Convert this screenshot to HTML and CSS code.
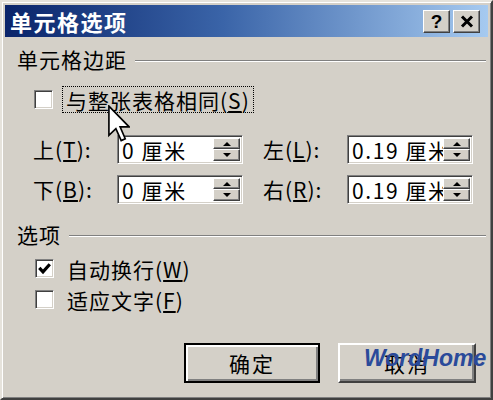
FILE: index.html
```html
<!DOCTYPE html>
<html lang="zh-CN">
<head>
    <meta charset="UTF-8">
    <meta name="viewport" content="width=device-width, initial-scale=1.0">
    <title>单元格选项</title>
    <link rel="stylesheet" href="styles.css">
</head>
<body>
    <div class="dialog">
        <div class="titlebar">
            <span class="title">单元格选项</span>
            <div class="caption-btns">
                <span class="cap-btn">?</span>
                <span class="cap-btn">
                    <svg width="14" height="13" viewBox="0 0 14 13"><path d="M2 1.5 L12 11.5 M12 1.5 L2 11.5" stroke="#000" stroke-width="3"/></svg>
                </span>
            </div>
        </div>

        <div class="content">
            <div class="group-head">
                <span>单元格边距</span>
                <span class="etch"></span>
            </div>

            <div class="check-row first">
                <span class="checkbox"></span>
                <span class="check-label focus">与整张表格相同(<u>S</u>)</span>
            </div>

            <div class="fields">
                <div class="field">
                    <span class="field-label">上(<u>T</u>):</span>
                    <div class="spin-box">
                        <span class="spin-value">0 厘米</span>
                        <span class="spinner"><span class="spin-btn up"></span><span class="spin-btn down"></span></span>
                    </div>
                </div>
                <div class="field">
                    <span class="field-label">左(<u>L</u>):</span>
                    <div class="spin-box">
                        <span class="spin-value">0.19 厘米</span>
                        <span class="spinner"><span class="spin-btn up"></span><span class="spin-btn down"></span></span>
                    </div>
                </div>
                <div class="field">
                    <span class="field-label">下(<u>B</u>):</span>
                    <div class="spin-box">
                        <span class="spin-value">0 厘米</span>
                        <span class="spinner"><span class="spin-btn up"></span><span class="spin-btn down"></span></span>
                    </div>
                </div>
                <div class="field">
                    <span class="field-label">右(<u>R</u>):</span>
                    <div class="spin-box">
                        <span class="spin-value">0.19 厘米</span>
                        <span class="spinner"><span class="spin-btn up"></span><span class="spin-btn down"></span></span>
                    </div>
                </div>
            </div>

            <div class="group-head second">
                <span>选项</span>
                <span class="etch"></span>
            </div>

            <div class="check-row options">
                <span class="checkbox">
                    <svg width="15" height="15" viewBox="0 0 15 15"><path d="M2.3 6.8 L6 10.8 L12.8 3.2" fill="none" stroke="#000" stroke-width="3.2"/></svg>
                </span>
                <span class="check-label">自动换行(<u>W</u>)</span>
            </div>
            <div class="check-row options tight">
                <span class="checkbox"></span>
                <span class="check-label">适应文字(<u>F</u>)</span>
            </div>

            <div class="buttons">
                <span class="btn default">确定</span>
                <span class="btn">取消</span>
            </div>
        </div>

        <svg class="cursor" width="22" height="37" viewBox="0 0 12 20">
            <path d="M0.5 0.5 L0.5 16.5 L4.3 12.8 L7.2 19.3 L9.4 18.3 L6.6 11.8 L11.5 11.8 Z" fill="#fff" stroke="#000" stroke-width="0.9"/>
        </svg>
        <span class="watermark">WordHome</span>
    </div>
</body>
</html>
```

FILE: styles.css
```css
* {
    box-sizing: border-box;
}
body {
    margin: 0;
    background: #d4d0c8;
    font-family: "Noto Sans CJK SC", "Liberation Sans", sans-serif;
    color: #000;
}
.dialog {
    position: relative;
    width: 493px;
    height: 400px;
    background: #d4d0c8;
    border: 2px solid;
    border-color: #e6e3dc #404040 #404040 #e6e3dc;
    box-shadow: inset 1px 1px 0 #fff, inset -1px -1px 0 #808080;
    padding: 3px;
    display: flex;
    flex-direction: column;
}
.titlebar {
    height: 32px;
    flex: none;
    display: flex;
    align-items: center;
    justify-content: space-between;
    padding: 0 8px 0 5px;
    background: linear-gradient(to right, #0a246a, #3a64a8 45%, #a6caf0);
}
.title {
    color: #fff;
    font-size: 22px;
    font-weight: bold;
    letter-spacing: 1.5px;
    line-height: 32px;
}
.caption-btns {
    display: flex;
    gap: 3px;
}
.cap-btn {
    width: 27px;
    height: 23px;
    display: flex;
    align-items: center;
    justify-content: center;
    background: #d4d0c8;
    border: 1px solid;
    border-color: #fff #404040 #404040 #fff;
    box-shadow: inset -1px -1px 0 #808080;
    font-family: "Liberation Sans", sans-serif;
    font-weight: bold;
    font-size: 19px;
    line-height: 1;
}
.content {
    flex: 1;
    display: flex;
    flex-direction: column;
    padding: 9px 12px 12px 12px;
    font-size: 21px;
    letter-spacing: 1px;
}
.group-head {
    height: 26px;
    display: flex;
    align-items: center;
    gap: 8px;
    margin-right: -10px;
    line-height: 26px;
}
.group-head.second {
    margin-top: 17px;
}
.etch {
    flex: 1;
    height: 2px;
    margin-top: 4px;
    border-top: 1px solid #808080;
    border-bottom: 1px solid #fff;
}
.check-row {
    height: 27px;
    display: flex;
    align-items: center;
    margin-left: 17px;
}
.check-row.first {
    margin-top: 14px;
}
.check-row.options {
    margin-top: 8px;
    margin-left: 18px;
}
.check-row.tight {
    margin-top: 4px;
}
.checkbox {
    width: 19px;
    height: 19px;
    background: #fff;
    border: 1px solid;
    border-color: #808080 #fff #fff #808080;
    box-shadow: inset 1px 1px 0 #404040, inset -1px -1px 0 #d4d0c8;
    display: flex;
    align-items: center;
    justify-content: center;
}
.check-label {
    margin-left: 9px;
    padding: 0 3px;
    height: 27px;
    line-height: 26px;
    border: 1px dotted transparent;
}
.check-label.focus {
    border-color: #000;
}
.fields {
    margin-top: 21px;
    margin-left: 16px;
    display: grid;
    grid-template-columns: repeat(2, 210px);
    column-gap: 20px;
    row-gap: 10px;
}
.field {
    display: flex;
    align-items: center;
}
.field-label {
    width: 84px;
}
.spin-box {
    width: 126px;
    height: 29px;
    display: flex;
    background: #fff;
    border: 1px solid;
    border-color: #808080 #fff #fff #808080;
    box-shadow: inset 1px 1px 0 #404040, inset -1px -1px 0 #d4d0c8;
    padding: 2px 2px 2px 4px;
}
.spin-value {
    flex: 1;
    overflow: hidden;
    white-space: nowrap;
    line-height: 24px;
    letter-spacing: 1.6px;
}
.spinner {
    width: 27px;
    display: flex;
    flex-direction: column;
}
.spin-btn {
    flex: 1;
    position: relative;
    background: #d4d0c8;
    border: 1px solid;
    border-color: #fff #404040 #404040 #fff;
    box-shadow: inset -1px -1px 0 #808080;
}
.spin-btn::after {
    content: "";
    position: absolute;
    left: 9px;
    top: 3px;
    border-left: 4px solid transparent;
    border-right: 4px solid transparent;
}
.spin-btn.up::after {
    border-bottom: 4px solid #000;
}
.spin-btn.down::after {
    border-top: 4px solid #000;
}
.buttons {
    margin-top: auto;
    display: flex;
    justify-content: flex-end;
    gap: 18px;
}
.btn {
    width: 138px;
    height: 40px;
    display: flex;
    align-items: center;
    justify-content: center;
    background: #d4d0c8;
    border: 2px solid;
    border-color: #fff #404040 #404040 #fff;
    box-shadow: inset -2px -2px 0 #808080;
    letter-spacing: 2px;
}
.btn.default {
    width: 136px;
    border: 2px solid #000;
    box-shadow: inset 2px 2px 0 #fff, inset -2px -2px 0 #808080;
}
.cursor {
    position: absolute;
    left: 106px;
    top: 103px;
}
.watermark {
    position: absolute;
    left: 362px;
    top: 345px;
    font-family: "Liberation Sans", sans-serif;
    font-weight: bold;
    font-style: italic;
    font-size: 23px;
    line-height: 22px;
    color: #2a4a9a;
}
```
